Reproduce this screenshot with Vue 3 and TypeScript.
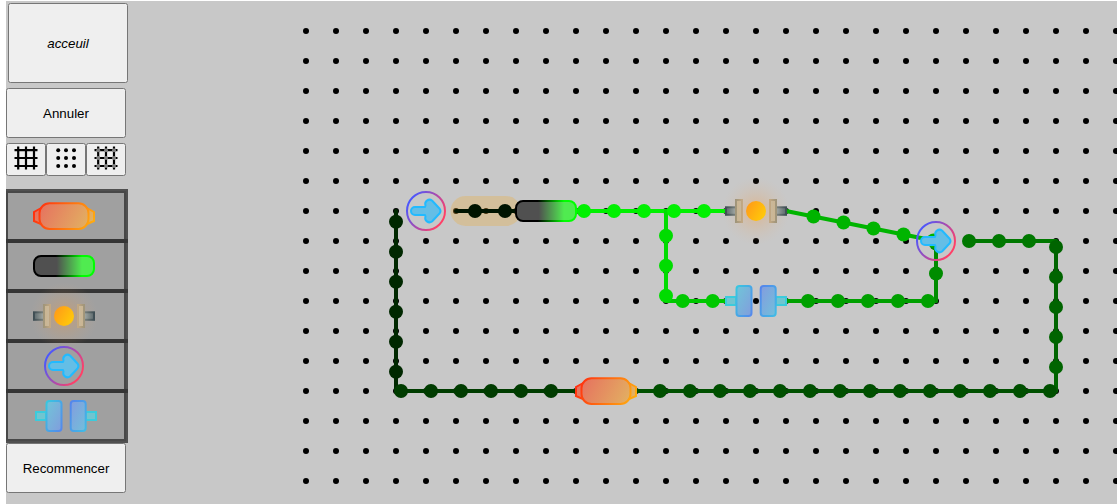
<script setup lang="ts">
type Kind = 'resistor' | 'battery' | 'lamp' | 'arrow' | 'capacitor'
interface Item { kind: Kind; x: number; y: number }
interface Wire { pts: string; color: string }
interface Charge { x: number; y: number; color: string }

const columns = Array.from({ length: 28 }, (_, i) => 300 + i * 30)
const rows = Array.from({ length: 16 }, (_, i) => 30 + i * 30)

const palette: Item[] = [
  { kind: 'resistor', x: 58, y: 215 },
  { kind: 'battery', x: 58, y: 265 },
  { kind: 'lamp', x: 58, y: 315 },
  { kind: 'arrow', x: 58, y: 365 },
  { kind: 'capacitor', x: 60, y: 415 },
]
const placed: Item[] = [
  { kind: 'battery', x: 540, y: 210 },
  { kind: 'lamp', x: 750, y: 210 },
  { kind: 'arrow', x: 420, y: 210 },
  { kind: 'arrow', x: 930, y: 240 },
  { kind: 'capacitor', x: 750, y: 300 },
  { kind: 'resistor', x: 600, y: 390 },
]
const items = [...palette, ...placed]

const wires: Wire[] = [
  { pts: '390,210 390,390', color: '#002800' },
  { pts: '390,390 570,390', color: '#003c00' },
  { pts: '630,390 1050,390', color: '#005000' },
  { pts: '1050,390 1050,240', color: '#006400' },
  { pts: '1050,240 960,240', color: '#007800' },
  { pts: '450,210 510,210', color: '#001400' },
  { pts: '570,210 720,210', color: '#00f000' },
  { pts: '660,210 660,300', color: '#00dc00' },
  { pts: '660,300 720,300', color: '#00c800' },
  { pts: '780,300 930,300', color: '#00a000' },
  { pts: '930,300 930,240', color: '#008c00' },
  { pts: '780,210 930,240', color: '#00b400' },
]

const line = (xs: number[], y: number, color: string): Charge[] => xs.map(x => ({ x, y, color }))
const column = (x: number, ys: number[], color: string): Charge[] => ys.map(y => ({ x, y, color }))
const steps = (from: number, count: number): number[] => Array.from({ length: count }, (_, i) => from + i * 30)

const charges: Charge[] = [
  ...line([469, 499], 210, '#001400'),
  ...line(steps(578, 5), 210, '#00f000'),
  ...column(660, steps(234.7, 3), '#00dc00'),
  ...line([676.7, 706.7], 300, '#00c800'),
  ...line(steps(802, 5), 300, '#00a000'),
  ...column(930, [242.5, 272.5], '#008c00'),
  ...[0, 1, 2, 3, 4].map(i => ({ x: 807.5 + 30 * i, y: 215.5 + 6 * i, color: '#00b400' })),
  ...line(steps(963, 3), 240, '#007800'),
  ...column(1050, steps(246, 5), '#006400'),
  ...line(steps(654, 14), 390, '#005000'),
  ...line(steps(395, 6), 390, '#003c00'),
  ...column(390, steps(220.7, 6), '#002800'),
]
const gridStops = [4.2, 12, 20]
</script>

<template>
  <main class="app">
    <svg class="board" width="1111" height="503" viewBox="0 0 1111 503">
      <defs>
        <linearGradient id="warm" gradientUnits="userSpaceOnUse" x1="-25" y1="-13" x2="25" y2="13">
          <stop offset="0" stop-color="#ff3010" /><stop offset="1" stop-color="#ffaa10" />
        </linearGradient>
        <linearGradient id="warmFill" gradientUnits="userSpaceOnUse" x1="-25" y1="-13" x2="25" y2="13">
          <stop offset="0" stop-color="#e6705f" /><stop offset="1" stop-color="#e2b362" />
        </linearGradient>
        <linearGradient id="cellFill"><stop offset=".38" stop-color="#505050" /><stop offset=".8" stop-color="#50eb50" /></linearGradient>
        <linearGradient id="cellEdge"><stop offset=".36" stop-color="#000" /><stop offset=".8" stop-color="#00ff00" /></linearGradient>
        <linearGradient id="ring" x1="0" y1=".2" x2="1" y2=".8">
          <stop offset="0.05" stop-color="#4858ff" /><stop offset=".9" stop-color="#ff4068" />
        </linearGradient>
        <radialGradient id="glow">
          <stop offset="0" stop-color="#ff9632" stop-opacity=".38" />
          <stop offset=".5" stop-color="#f0a050" stop-opacity=".16" />
          <stop offset="1" stop-color="#e0b48c" stop-opacity="0" />
        </radialGradient>
        <linearGradient id="bulb" x1="0" y1=".2" x2="1" y2=".8"><stop offset="0" stop-color="#ff9a18" /><stop offset="1" stop-color="#ffcd08" /></linearGradient>
        <linearGradient id="holder"><stop offset="0" stop-color="#cbb590" /><stop offset="1" stop-color="#c9b89c" /></linearGradient>
        <linearGradient id="holderEdge"><stop offset="0" stop-color="#a0957a" /><stop offset="1" stop-color="#c2a883" /></linearGradient>
        <linearGradient id="pin"><stop offset="0" stop-color="#5c696d" /><stop offset="1" stop-color="#a5aaa5" /></linearGradient>
        <linearGradient id="pinEdge"><stop offset="0" stop-color="#3f4e54" /><stop offset="1" stop-color="#7f8580" /></linearGradient>
        <linearGradient id="plateL" x1="0" y1="0" x2="1" y2="1"><stop offset="0" stop-color="#70c5d8" /><stop offset="1" stop-color="#819ddd" /></linearGradient>
        <linearGradient id="plateR" x1="0" y1="0" x2="1" y2="1"><stop offset="0" stop-color="#839cde" /><stop offset="1" stop-color="#72bfdb" /></linearGradient>
        <linearGradient id="edgeL" x1="0" y1="0" x2="1" y2="1"><stop offset="0" stop-color="#38c8e0" /><stop offset="1" stop-color="#5588ec" /></linearGradient>
        <linearGradient id="edgeR" x1="0" y1="0" x2="1" y2="1"><stop offset="0" stop-color="#5584ec" /><stop offset="1" stop-color="#40bce5" /></linearGradient>
      </defs>

      <template v-for="y in rows" :key="y">
        <circle v-for="x in columns" :key="x" :cx="x" :cy="y" r="3" />
      </template>

      <g class="slots">
        <rect v-for="n in 5" :key="n" x="0" :y="140 + n * 50" width="120" height="50" />
      </g>

      <line class="halo" x1="459.5" y1="210" x2="500" y2="210" />
      <polyline v-for="w in wires" :key="w.pts" class="wire" :points="w.pts" :stroke="w.color" />
      <circle v-for="(c, i) in charges" :key="i" :cx="c.x" :cy="c.y" r="7" :fill="c.color" />

      <g v-for="(item, i) in items" :key="i" :transform="`translate(${item.x} ${item.y})`">
        <g v-if="item.kind === 'resistor'" fill="url(#warmFill)" stroke="url(#warm)" stroke-width="2">
          <path d="M-21-9L-30-4V5L-21 9ZM21-9L30-4V5L21 9Z" />
          <rect x="-24.5" y="-12.7" width="49" height="25.700" rx="10" />
        </g>
        <rect v-else-if="item.kind === 'battery'" x="-30" y="-10" width="60" height="20" rx="7" fill="url(#cellFill)" stroke="url(#cellEdge)" stroke-width="2" />
        <g v-else-if="item.kind === 'lamp'">
          <circle r="34" fill="url(#glow)" />
          <g v-for="s in [1, -1]" :key="s" :transform="`scale(${s} 1)`">
            <rect x="-30" y="-3.7" width="10" height="7.5" fill="url(#pin)" stroke="url(#pinEdge)" stroke-width="2" />
            <rect x="-20" y="-11" width="6" height="22" fill="url(#holder)" stroke="url(#holderEdge)" stroke-width="2" />
          </g>
          <circle r="10" fill="url(#bulb)" />
        </g>
        <g v-else-if="item.kind === 'arrow'">
          <circle r="19" fill="none" stroke="url(#ring)" stroke-width="2" />
          <path class="arrow" d="M-11-4H-1L-.5-5.500A4.300 4.300 0 0 1 6-10.500L13.700-2.200Q15.300 0 13.700 2.200L6 10.500A4.300 4.300 0 0 1-.5 5.500L-1 4H-11A4 4 0 0 1-11-4Z" />
        </g>
        <g v-else stroke-width="2">
          <path d="M-20-4H-30V4H-20ZM20-4H30V4H20Z" fill="#70c5d0" stroke="#3bcbdc" />
          <rect x="-19.5" y="-15" width="15" height="30" rx="3" fill="url(#plateL)" stroke="url(#edgeL)" />
          <rect x="4.7" y="-15" width="15" height="30" rx="3" fill="url(#plateR)" stroke="url(#edgeR)" />
        </g>
      </g>
    </svg>

    <nav class="tools">
      <button class="home"><i>acceuil</i></button>
      <button class="wide">Annuler</button>
      <div class="grids">
        <button>
          <svg width="24" height="24" viewBox="0 0 24 24"><path class="mesh" d="M4.200.5V23.500M12 .5V23.500M20 .5V23.500M.5 4.200H23.500M.5 12H23.500M.5 20H23.500" /></svg>
        </button>
        <button>
          <svg width="24" height="24" viewBox="0 0 24 24">
            <template v-for="y in gridStops" :key="y"><circle v-for="x in gridStops" :key="x" :cx="x" :cy="y" r="2" /></template>
          </svg>
        </button>
        <button>
          <svg width="24" height="24" viewBox="0 0 24 24">
            <path class="mesh" d="M4.200.5V23.500M12 .5V23.500M20 .5V23.500M.5 4.200H23.500M.5 12H23.500M.5 20H23.500" />
            <template v-for="y in gridStops" :key="y"><circle v-for="x in gridStops" :key="x" :cx="x" :cy="y" r="2" fill="#808080" /></template>
          </svg>
        </button>
      </div>
      <button class="wide reset">Recommencer</button>
    </nav>
  </main>
</template>

<style>
body { background: #fff; overflow: hidden; }
</style>

<style scoped>
.app { display: grid; height: 504px; padding: 1px 0 0 6px; box-sizing: border-box; overflow: hidden; }
.board, .tools { grid-area: 1 / 1; }
.board { display: block; background: #c8c8c8; }
.tools { position: relative; width: 122px; }
button { display: block; box-sizing: border-box; margin: 0; padding: 0; border: 1px solid #767676; border-radius: 2.5px; background: #efefef; color: #000; font: 13.333px "Liberation Sans", Arial, sans-serif; }
.home { width: 120px; height: 80px; margin: 2px 0 5px 2px; }
.wide { width: 120px; height: 50px; }
.grids { display: flex; margin-top: 5px; }
.grids button { display: flex; align-items: center; justify-content: center; width: 40px; height: 33px; padding-bottom: 3px; }
.reset { margin-top: 267px; }
.mesh { fill: none; stroke: #000; stroke-width: 2.2; }
.slots rect { fill: rgba(0, 0, 0, .2); stroke: rgba(50, 50, 50, .8); stroke-width: 4; }
.halo { stroke: rgba(240, 173, 53, .3); stroke-width: 30; stroke-linecap: round; }
.wire { fill: none; stroke-width: 4; stroke-linecap: round; }
.arrow { fill: #64bee6; stroke: #22baff; stroke-width: 2; stroke-linejoin: round; }
</style>
